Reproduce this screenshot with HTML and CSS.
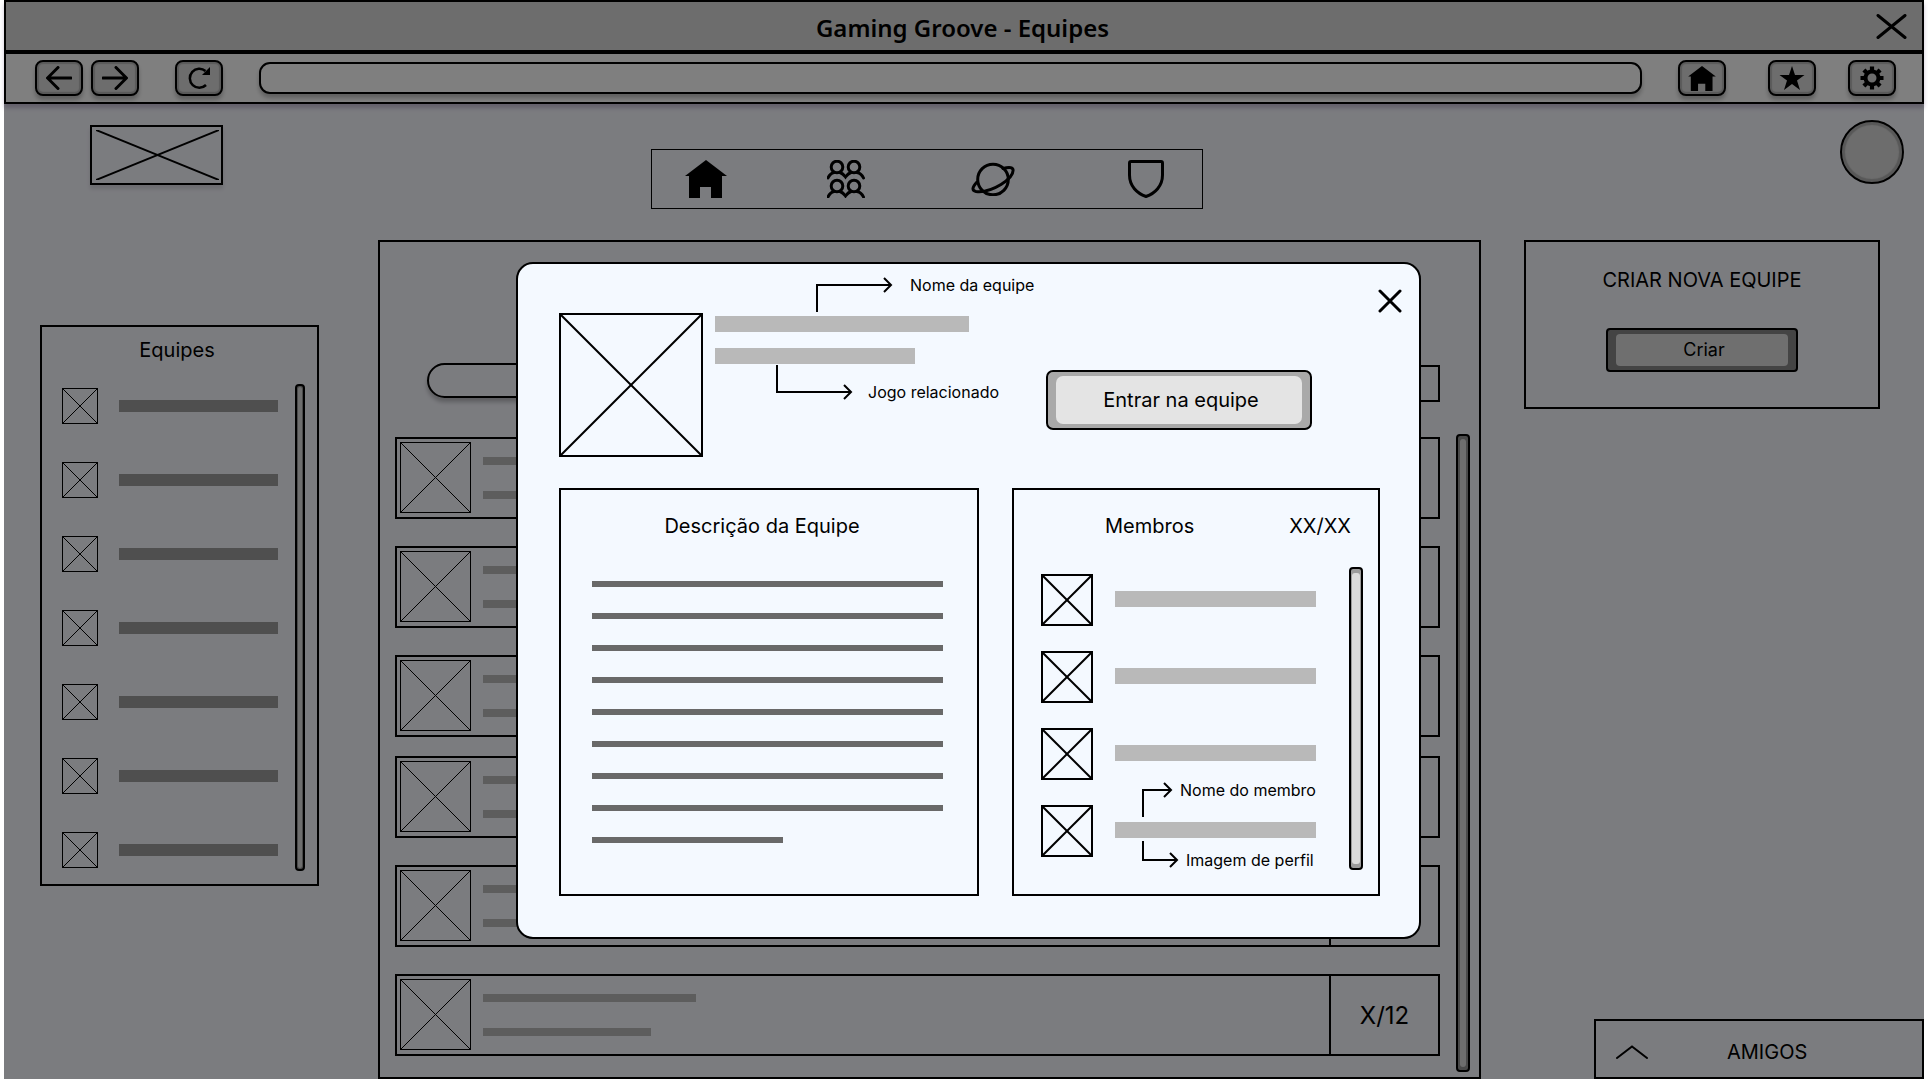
FILE: index.html
```html
<!DOCTYPE html>
<html lang="pt-BR">
<head>
<meta charset="utf-8">
<title>Gaming Groove - Equipes</title>
<link rel="stylesheet" href="styles.css">
</head>
<body>
<svg class="symbols" aria-hidden="true">
  <symbol id="cross"><line x1="0" y1="0" x2="100%" y2="100%"/><line x1="0" y1="100%" x2="100%" y2="0"/></symbol>
  <symbol id="home" viewBox="0 0 42 38"><path d="M21 0 42 16H37V38H26V27H15V38H4V16H0Z"/></symbol>
</svg>
<div class="frame">
  <header class="browser">
    <div class="titlebar">
      <h1 class="window-title">Gaming Groove - Equipes</h1>
      <button class="icon-button window-close" aria-label="Fechar janela"><svg width="31" height="25" viewBox="0 0 31 25" class="stroke"><path d="M2 1.500 29 23.500M2 23.500 29 1.500"/></svg></button>
    </div>
    <div class="toolbar">
      <div class="history">
        <button class="key" aria-label="Voltar"><svg width="26" height="24" viewBox="0 0 26 24" class="stroke"><path d="M25 12H2M12 1.500 1.500 12 12 22.500"/></svg></button>
        <button class="key" aria-label="Avançar"><svg width="26" height="24" viewBox="0 0 26 24" class="stroke"><path d="M1 12H24M14 1.500 24.500 12 14 22.500"/></svg></button>
      </div>
      <button class="key" aria-label="Recarregar"><svg width="24" height="24" viewBox="0 0 24 24"><path d="M19 19A9.500 9.500 0 1 1 18.500 5" fill="none" stroke="#000" stroke-width="2.500"/><path d="M23 1V9H15Z"/></svg></button>
      <input class="address" type="text" aria-label="Endereço">
      <div class="shortcuts">
        <button class="key" aria-label="Página inicial"><svg width="28" height="25"><use href="#home"/></svg></button>
        <button class="key key-star" aria-label="Favoritos"><svg width="26" height="24" viewBox="0 0 26 24"><path d="M13 0 16 9H25.500L18 14.500 21 24 13 18 5 24 8 14.500.500 9H10Z"/></svg></button>
        <button class="key" aria-label="Configurações"><svg width="24" height="24" viewBox="0 0 24 24"><circle cx="12" cy="12" r="6.500" fill="none" stroke="#000" stroke-width="4"/><path d="M12 .5V5M12 19V23.500M.5 12H5M19 12H23.500M3.900 3.900 7 7M17 17 20.100 20.100M3.900 20.100 7 17M17 7 20.100 3.900" stroke="#000" stroke-width="4.200"/></svg></button>
      </div>
    </div>
  </header>

  <div class="page">
    <a class="logo" href="#" aria-label="Gaming Groove"><svg class="logo-cross"><use href="#cross"/></svg></a>
    <nav class="nav" aria-label="Principal">
      <a href="#" aria-label="Início"><svg width="42" height="38"><use href="#home"/></svg></a>
      <a href="#" aria-label="Comunidades"><svg width="38" height="38" viewBox="0 0 38 38" class="thin"><g id="pair"><circle cx="10" cy="7" r="5.800"/><circle cx="27" cy="7" r="5.800"/><path d="M1 18Q3 13.500 7 12.500M13 12.500Q16 13.500 18.500 17Q21 13.500 24 12.500M30 12.500Q34.500 13.500 36.500 18"/></g><use href="#pair" y="19"/></svg></a>
      <a href="#" aria-label="Explorar"><svg width="44" height="34" viewBox="0 0 44 34" class="thin"><circle cx="22" cy="17.500" r="15.300"/><path d="M32 6.500Q41 4 42 7.500C43 14 34 20 30 22.500Q16 31 5 29.500Q-1.500 28 6 20"/></svg></a>
      <a href="#" aria-label="Equipes"><svg width="36" height="38" viewBox="0 0 36 38" class="thin"><path d="M3 1.500H33Q34.500 1.500 34.500 3V15C34.500 26 27 33.500 18 36.500C9 33.500 1.500 26 1.500 15V3Q1.500 1.500 3 1.500Z"/></svg></a>
    </nav>
    <button class="avatar" aria-label="Perfil"></button>

    <aside class="teams">
      <h2 class="teams-title">Equipes</h2>
      <div class="teams-body">
        <ul class="teams-list">
          <li><svg class="cross"><use href="#cross"/></svg><span class="bar"></span></li>
          <li><svg class="cross"><use href="#cross"/></svg><span class="bar"></span></li>
          <li><svg class="cross"><use href="#cross"/></svg><span class="bar"></span></li>
          <li><svg class="cross"><use href="#cross"/></svg><span class="bar"></span></li>
          <li><svg class="cross"><use href="#cross"/></svg><span class="bar"></span></li>
          <li><svg class="cross"><use href="#cross"/></svg><span class="bar"></span></li>
          <li><svg class="cross"><use href="#cross"/></svg><span class="bar"></span></li>
        </ul>
        <div class="scroll scroll-small"><span></span></div>
      </div>
    </aside>

    <main class="results">
      <div class="results-content">
        <div class="filters">
          <input class="search" type="search" aria-label="Buscar equipes">
          <select class="filter" aria-label="Filtro"></select>
        </div>
        <ul class="cards">
          <li class="card"><svg class="cross"><use href="#cross"/></svg><div class="card-lines"><span></span><span></span></div><div class="count"></div></li>
          <li class="card"><svg class="cross"><use href="#cross"/></svg><div class="card-lines"><span></span><span></span></div><div class="count"></div></li>
          <li class="card"><svg class="cross"><use href="#cross"/></svg><div class="card-lines"><span></span><span></span></div><div class="count"></div></li>
        </ul>
        <ul class="cards">
          <li class="card"><svg class="cross"><use href="#cross"/></svg><div class="card-lines"><span></span><span></span></div><div class="count"></div></li>
          <li class="card"><svg class="cross"><use href="#cross"/></svg><div class="card-lines"><span></span><span></span></div><div class="count"></div></li>
          <li class="card"><svg class="cross"><use href="#cross"/></svg><div class="card-lines"><span></span><span></span></div><div class="count">X/12</div></li>
        </ul>
      </div>
      <div class="scroll scroll-main"><span></span></div>
    </main>

    <aside class="side">
      <section class="create">
        <h2>CRIAR NOVA EQUIPE</h2>
        <button class="bevel bevel-dark"><span>Criar</span></button>
      </section>
      <button class="friends"><svg width="32" height="14" viewBox="0 0 32 14" class="thin"><path d="M1 13 16 1.500 31 13"/></svg>AMIGOS</button>
    </aside>
  </div>

  <div class="backdrop">
    <section class="modal" role="dialog" aria-modal="true" aria-label="Equipe">
      <button class="icon-button modal-close" aria-label="Fechar"><svg width="24" height="24" viewBox="0 0 24 24" class="stroke"><path d="M2 2 22 22M2 22 22 2"/></svg></button>
      <div class="modal-head">
        <svg class="cross team-picture"><use href="#cross"/></svg>
        <div class="team-info">
          <span class="bar team-name"></span>
          <span class="bar team-game"></span>
          <div class="callout callout-name"><svg width="77" height="35" class="arrow"><path d="M1 35V8H75M68 1 75 8 68 15"/></svg>Nome da equipe</div>
          <div class="callout callout-game"><svg width="77" height="35" class="arrow"><path d="M1 0V27H75M68 20 75 27 68 34"/></svg>Jogo relacionado</div>
        </div>
        <button class="bevel join"><span>Entrar na equipe</span></button>
      </div>
      <div class="modal-panels">
        <section class="panel about">
          <h2>Descrição da Equipe</h2>
          <div class="about-lines"><span></span><span></span><span></span><span></span><span></span><span></span><span></span><span></span><span></span></div>
        </section>
        <section class="panel members">
          <div class="members-head"><h2>Membros</h2><span>XX/XX</span></div>
          <div class="members-body">
            <ul class="members-list">
              <li><svg class="cross"><use href="#cross"/></svg><span class="bar"></span></li>
              <li><svg class="cross"><use href="#cross"/></svg><span class="bar"></span></li>
              <li><svg class="cross"><use href="#cross"/></svg><span class="bar"></span></li>
              <li><svg class="cross"><use href="#cross"/></svg><div class="bar">
                <div class="callout callout-member"><svg width="31" height="35" class="arrow"><path d="M1 35V8H29M22 1 29 8 22 15"/></svg>Nome do membro</div>
                <div class="callout callout-profile"><svg width="37" height="27" class="arrow"><path d="M1 0V19H35M28 12 35 19 28 26"/></svg>Imagem de perfil</div>
              </div></li>
            </ul>
            <div class="scroll scroll-light"><span></span></div>
          </div>
        </section>
      </div>
    </section>
  </div>
</div>
</body>
</html>
```
FILE: styles.css
```css
* { box-sizing: border-box; }

body {
  margin: 0;
  background: #fff;
  color: #000;
  font: 20px/24px Inter, "Liberation Sans", sans-serif;
}

h1, h2, ul { margin: 0; padding: 0; font-size: 20px; font-weight: 400; }
ul { list-style: none; }
button { font: inherit; color: inherit; cursor: pointer; padding: 0; }
svg { display: block; flex: none; }
.symbols { position: absolute; width: 0; height: 0; }

.frame {
  position: relative;
  display: flex;
  flex-direction: column;
  margin: 0 4px;
  min-height: calc(100vh - 1px);
  background: #f7f8ff;
}

.stroke, .thin, .arrow { fill: none; stroke: #000; stroke-width: 3; stroke-linecap: round; }
.thin { stroke-width: 2; }
.arrow { stroke-width: 2; stroke-linecap: butt; }
.icon-button { border: 0; background: none; }

/* Browser window */
.browser {
  border: 2px solid #000;
  background: #fff;
  box-shadow: 0 4px 4px rgba(60, 30, 90, .25);
}
.titlebar {
  display: grid;
  grid-template-columns: 1fr auto 1fr;
  align-items: center;
  height: 52px;
  padding: 0 15px;
  border-bottom: 4px solid #000;
  background: #dadada;
}
.window-title {
  grid-column: 2;
  padding: 4px 3px 0 0;
  font: 600 24px/32px "Noto Sans", "Open Sans", sans-serif;
}
.window-close { justify-self: end; }
.toolbar {
  display: flex;
  align-items: center;
  gap: 36px;
  height: 48px;
  padding: 0 26px 0 29px;
}
.history { display: flex; gap: 8px; }
.shortcuts { display: flex; gap: 32px; }
.key-star { margin-left: 10px; }
.key {
  display: flex;
  align-items: center;
  justify-content: center;
  width: 48px;
  height: 36px;
  border: 2px solid #000;
  border-radius: 8px;
  background: #dadada;
  box-shadow: inset 0 0 1px 2px #b4b4b4, inset 0 -2px 1px #b4b4b4, 0 4px 4px rgba(0, 0, 0, .25);
}
.address {
  flex: 1;
  min-width: 0;
  height: 32px;
  padding: 0 12px;
  border: 2px solid #000;
  border-radius: 11px;
  background: #fff;
  box-shadow: 0 4px 4px rgba(0, 0, 0, .25);
  font: inherit;
}

/* Page */
.page {
  flex: 1;
  display: grid;
  grid-template-columns: 374px minmax(0, 1fr) 443px;
  grid-template-rows: 136px 1fr;
}
.logo {
  width: 133px;
  height: 60px;
  margin: 21px 0 0 86px;
  padding: 3px 2px 3px 4px;
  border: 2px solid #000;
  box-shadow: 0 4px 4px rgba(0, 0, 0, .12);
}
.logo-cross { width: 100%; height: 100%; stroke: #000; stroke-width: 2; }
.nav {
  justify-self: center;
  display: grid;
  grid-template-columns: 142fr 144fr 157fr 74fr;
  align-items: center;
  width: 552px;
  height: 60px;
  margin: 45px 5px 0 0;
  padding-left: 33px;
  border: 1px solid #000;
}
.nav .thin { stroke-width: 3; }
.avatar {
  justify-self: end;
  width: 64px;
  height: 64px;
  margin: 16px 20px 0 0;
  border: 2px solid #000;
  border-radius: 50%;
  background: #dadada;
  box-shadow: inset 0 0 1px 3px #b0b0b0;
}

.cross { border: 1px solid #000; stroke: #000; stroke-width: 1; }

.scroll {
  width: 14px;
  padding: 3px 2px;
  border: 2px solid #000;
  border-radius: 4px;
  background: #949494;
}
.scroll span { display: block; height: 100%; border-radius: 3px; background: #dcdcdc; }

.teams {
  align-self: start;
  margin: 85px 59px 0 36px;
  padding: 11px 12px 13px 20px;
  border: 2px solid #000;
}
.teams-title { padding-right: 13px; text-align: center; }
.teams-body { display: flex; gap: 17px; margin-top: 22px; }
.teams-list {
  flex: 1;
  display: flex;
  flex-direction: column;
  gap: 38px;
  padding: 4px 0 3px;
}
.teams-list li { display: flex; gap: 21px; }
.teams-list .cross { width: 36px; height: 36px; }
.teams-list .bar { flex: 1; height: 12px; margin-top: 12px; background: #9f9f9f; }
.scroll-small { width: 10px; padding: 1px; }

.results { display: flex; gap: 16px; padding: 0 9px 0 15px; border: 2px solid #000; }
.results-content { flex: 1; min-width: 0; padding: 121px 0 21px; }
.filters { display: flex; gap: 24px; height: 39px; margin: 0 0 35px 32px; }
.search {
  flex: 1;
  height: 35px;
  padding: 0 16px;
  border: 2px solid #000;
  border-radius: 18px;
  background: transparent;
  box-shadow: 0 4px 4px rgba(0, 0, 0, .25);
  font: inherit;
  appearance: none;
}
.filter {
  align-self: end;
  width: 180px;
  height: 37px;
  border: 2px solid #000;
  border-radius: 0;
  background: transparent;
  appearance: none;
}
.cards { display: flex; flex-direction: column; gap: 27px; }
.cards + .cards { margin-top: 19px; }
.card { display: flex; height: 82px; padding-left: 3px; border: 2px solid #000; }
.card .cross { width: 71px; height: 71px; margin-top: 3px; }
.card-lines { flex: 1; display: grid; align-content: start; gap: 26px; padding: 18px 0 0 12px; }
.card-lines span { width: 213px; height: 8px; background: #bababa; }
.card-lines span + span { width: 168px; }
.count {
  display: flex;
  align-items: center;
  justify-content: center;
  width: 109px;
  padding-top: 2px;
  border-left: 2px solid #000;
  font-size: 24px;
}
.scroll-main { margin: 192px 0 5px; }

.side { display: flex; flex-direction: column; }
.create {
  display: flex;
  flex-direction: column;
  align-items: center;
  gap: 36px;
  margin: 0 44px 0 43px;
  padding: 26px 0 35px;
  border: 2px solid #000;
}
.bevel {
  width: 266px;
  height: 60px;
  padding: 4px 8px;
  border: 2px solid #000;
  border-radius: 7px;
  background: #a9a9a9;
}
.bevel span {
  display: flex;
  align-items: center;
  justify-content: center;
  height: 100%;
  padding-left: 4px;
  border-radius: 7px;
  background: #e4e4e4;
}
.bevel-dark { width: 192px; height: 44px; border-radius: 4px; background: #888; font-size: 18px; }
.bevel-dark span { border-radius: 4px; background: #dedede; }
.friends {
  display: flex;
  align-items: center;
  align-self: end;
  gap: 79px;
  width: 330px;
  height: 60px;
  margin-top: auto;
  padding: 6px 0 0 20px;
  border: 2px solid #000;
  background: transparent;
}

/* Team dialog */
.backdrop {
  position: absolute;
  inset: 0;
  display: flex;
  align-items: flex-start;
  justify-content: center;
  padding: 262px 0 0 9px;
  background: rgba(0, 0, 0, .5);
}
.modal {
  position: relative;
  width: 100%;
  max-width: 905px;
  padding: 49px 39px 41px 41px;
  border: 2px solid #000;
  border-radius: 17px;
  background: #f4f9ff;
}
.modal-close { position: absolute; top: 25px; right: 17px; }
.modal .cross { border-width: 2px; stroke-width: 2; }
.modal .bar { background: #b9b9b9; height: 16px; }
.modal-head { display: flex; gap: 12px; }
.team-picture { width: 144px; height: 144px; }
.team-info {
  position: relative;
  flex: 1;
  display: flex;
  flex-direction: column;
  gap: 16px;
  padding-top: 3px;
}
.team-name { width: 254px; }
.team-game { width: 200px; }
.callout { position: absolute; display: flex; gap: 7px; font-size: 16px; line-height: 16px; white-space: nowrap; }
.callout-name { top: -36px; left: 101px; gap: 17px; }
.callout-game { top: 52px; left: 61px; gap: 15px; align-items: flex-end; }
.join { margin: 57px 68px 0 0; }
.modal-panels {
  display: grid;
  grid-template-columns: 420fr 368fr;
  gap: 33px;
  min-height: 408px;
  margin-top: 31px;
}
.panel { display: flex; flex-direction: column; border: 2px solid #000; }
.about { padding: 24px 34px 22px 31px; }
.about h2 { padding-right: 11px; text-align: center; }
.about-lines { display: grid; gap: 26px; margin-top: 43px; }
.about-lines span { height: 6px; background: #696969; }
.about-lines span:last-child { width: 191px; }
.members { padding: 24px 15px 24px 27px; }
.members-head { display: flex; justify-content: space-between; padding: 0 12px 0 64px; }
.members-body { flex: 1; display: flex; gap: 33px; margin-top: 29px; }
.members-list { flex: 1; display: flex; flex-direction: column; gap: 25px; padding-top: 7px; }
.members-list li { display: flex; gap: 22px; }
.members-list .cross { width: 52px; height: 52px; }
.members-list .bar { position: relative; flex: 1; margin-top: 17px; }
.callout-member { top: -40px; left: 27px; }
.callout-profile { top: 19px; left: 27px; align-items: flex-end; }
.scroll-light { padding: 4px 1px; background: #9c9c9c; }
```
